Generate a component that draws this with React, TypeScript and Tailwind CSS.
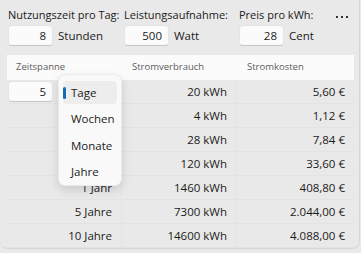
import React from 'react'

const font = {fontFamily: '"Open Sans", "Noto Sans", sans-serif'}

const rows = [
  {span: '', kwh: '20 kWh', cost: '5,60 €'},
  {span: '', kwh: '4 kWh', cost: '1,12 €'},
  {span: '', kwh: '28 kWh', cost: '7,84 €'},
  {span: '', kwh: '120 kWh', cost: '33,60 €'},
  {span: '1 Jahr', kwh: '1460 kWh', cost: '408,80 €'},
  {span: '5 Jahre', kwh: '7300 kWh', cost: '2.044,00 €'},
  {span: '10 Jahre', kwh: '14600 kWh', cost: '4.088,00 €'},
]

function NumBox({value}: {value: string}) {
  return (
    <div className="w-[45px] h-[21px] bg-[#fbfbfb] rounded-[4px] border border-[#e4e4e4] border-b-[#c6c6c6] flex items-center justify-end pr-[6px] text-[11.5px] text-[#1b1b1b]">
      {value}
    </div>
  )
}

function Field({label, value, unit}: {label: string; value: string; unit: string}) {
  return (
    <div className="flex flex-col">
      <div className="h-[17px] text-[11px] text-[#1b1b1b] leading-[17px] whitespace-nowrap">{label}</div>
      <div className="flex items-center gap-[5px] mt-[2px]">
        <NumBox value={value} />
        <span className="text-[11.5px] text-[#1b1b1b]">{unit}</span>
      </div>
    </div>
  )
}

export default function App() {
  return (
    <div style={font} className="relative w-[361px] h-[253px] overflow-hidden bg-[#e9e9e9]">
      <div className="absolute inset-0 right-[1px] bottom-[4px] border-r border-b border-[#d6d6d6] rounded-b-[8px] pointer-events-none" />
      <div className="flex pt-[6px] pl-[8px]">
        <div className="w-[116px]"><Field label="Nutzungszeit pro Tag:" value="8" unit="Stunden" /></div>
        <div className="w-[115px]"><Field label="Leistungsaufnahme:" value="500" unit="Watt" /></div>
        <div className="w-[90px]"><Field label="Preis pro kWh:" value="28" unit="Cent" /></div>
        <div className="flex gap-[3px] mt-[10px] ml-[7px]">
          <span className="w-[2px] h-[2px] bg-[#333]" />
          <span className="w-[2px] h-[2px] bg-[#333]" />
          <span className="w-[2px] h-[2px] bg-[#333]" />
        </div>
      </div>

      <div className="mx-[7px] mt-[9px] w-[347px]">
        <div className="grid grid-cols-[115px_115px_117px] h-[25px] bg-[#fbfbfb] items-center text-[9.5px] text-[#5c5c5c]">
          <div className="pl-[9px]">Zeitspanne</div>
          <div className="pl-[10px]">Stromverbrauch</div>
          <div className="pl-[10px]">Stromkosten</div>
        </div>
        {rows.map((r, i) => (
          <div key={i} className="grid grid-cols-[115px_115px_117px] h-[24px] border-b border-[#e3e3e3] text-[11.5px] text-[#1b1b1b]">
            <div className="flex items-center justify-end pr-[9px] border-r border-[#e3e3e3]">
              {i === 0 ? (
                <div className="flex w-full items-center">
                  <div className="ml-[1px]"><NumBox value="5" /></div>
                </div>
              ) : r.span}
            </div>
            <div className="flex items-center justify-end pr-[9px] border-r border-[#e3e3e3]">{r.kwh}</div>
            <div className="flex items-center justify-end pr-[9px]">{r.cost}</div>
          </div>
        ))}
      </div>

      <div className="absolute left-[58px] top-[74px] w-[64px] h-[112px] bg-[#f9f9f9] rounded-[7px] border border-[#ebebeb] shadow-[0_4px_10px_rgba(0,0,0,0.13)] pt-[4px] px-[4px]">
        {['Tage', 'Wochen', 'Monate', 'Jahre'].map((t, i) => (
          <div key={t} className="h-[26.5px] flex items-center">
            <div className={`relative w-full h-[23px] rounded-[4px] flex items-center pl-[8px] text-[11.5px] text-[#1b1b1b] ${i === 0 ? 'bg-[#ededed]' : ''}`}>
              {i === 0 && <span className="absolute left-0 top-[6px] w-[3px] h-[12px] rounded-full bg-[#0f6cbd]" />}
              {t}
            </div>
          </div>
        ))}
      </div>
    </div>
  )
}
